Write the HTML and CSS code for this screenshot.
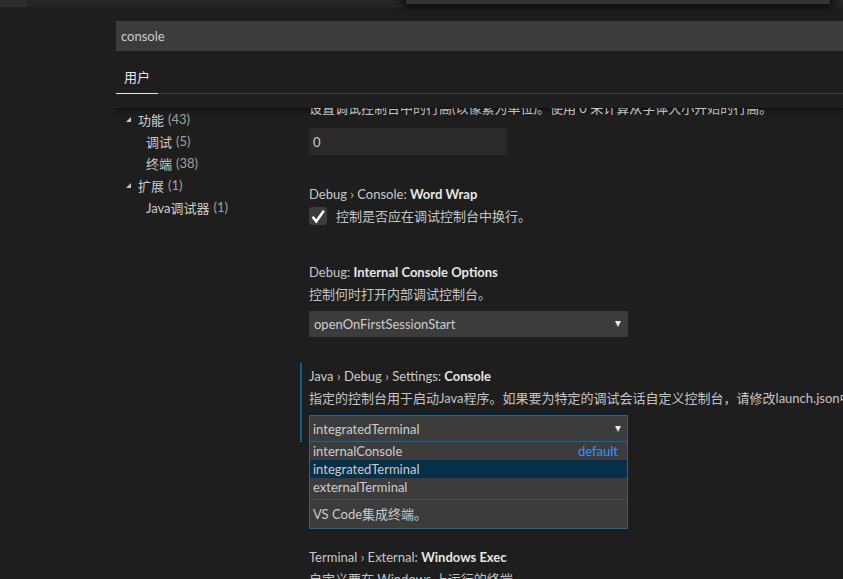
FILE: index.html
```html
<!DOCTYPE html>
<html lang="zh-CN">
<head>
<meta charset="utf-8">
<title>Settings</title>
<link rel="stylesheet" href="styles.css">
</head>
<body>
<div class="titlebar"><div class="titlebar-left"></div></div>
<div class="quickpick"></div>
<div class="editor">
  <div class="search"><span class="search-text">console</span></div>
  <div class="tabs"><div class="tab active">用户</div></div>
  <div class="body">
    <nav class="toc">
      <div class="toc-row lvl0"><span class="twistie"></span><span class="toc-label">功能</span><span class="count">(43)</span></div>
      <div class="toc-row lvl1"><span class="toc-label">调试</span><span class="count">(5)</span></div>
      <div class="toc-row lvl1"><span class="toc-label">终端</span><span class="count">(38)</span></div>
      <div class="toc-row lvl0"><span class="twistie"></span><span class="toc-label">扩展</span><span class="count">(1)</span></div>
      <div class="toc-row lvl1"><span class="toc-label">Java调试器</span><span class="count">(1)</span></div>
    </nav>
    <div class="settings">
      <div class="settings-inner">
        <div class="setting">
          <div class="setting-body">
            <div class="desc first">设置调试控制台中的行高(以像素为单位)。使用 0 来计算从字体大小开始的行高。</div>
            <div class="textinput first-input">0</div>
          </div>
        </div>

        <div class="setting">
          <div class="setting-body">
            <div class="title">Debug <span class="sep">›</span> Console: <b>Word Wrap</b></div>
            <div class="check-row">
              <span class="checkbox"><svg width="18" height="18" viewBox="0 0 18 18"><path d="M2.6 10.4 L4.6 8.9 L7.1 12.3 L13.9 3.1 L15.8 4.6 L7.3 16.4 Z" fill="#ffffff"/></svg></span>
              <span class="check-label">控制是否应在调试控制台中换行。</span>
            </div>
          </div>
        </div>

        <div class="setting">
          <div class="setting-body">
            <div class="title">Debug: <b>Internal Console Options</b></div>
            <div class="desc">控制何时打开内部调试控制台。</div>
            <div class="select"><span>openOnFirstSessionStart</span><span class="arrow"></span></div>
          </div>
        </div>

        <div class="setting focused">
          <div class="setting-body">
            <div class="title">Java <span class="sep">›</span> Debug <span class="sep">›</span> Settings: <b>Console</b></div>
            <div class="desc">指定的控制台用于启动Java程序。如果要为特定的调试会话自定义控制台，请修改launch.json中的“console”配置。</div>
            <div class="select open"><span>integratedTerminal</span><span class="arrow"></span></div>
          </div>
          <div class="dropdown">
            <div class="option"><span>internalConsole</span><span class="default">default</span></div>
            <div class="option selected"><span>integratedTerminal</span></div>
            <div class="option"><span>externalTerminal</span></div>
            <div class="details">VS Code集成终端。</div>
          </div>
        </div>

        <div class="setting">
          <div class="setting-body">
            <div class="title">Terminal <span class="sep">›</span> External: <b>Windows Exec</b></div>
            <div class="desc">自定义要在 Windows 上运行的终端。</div>
          </div>
        </div>
      </div>
    </div>
  </div>
</div>
</body>
</html>
```
FILE: styles.css
```css
html, body {
  margin: 0;
  height: 100%;
  background: #1e1e1e;
  overflow: hidden;
}
body {
  position: relative;
  font-family: Lato, "Noto Sans CJK SC", sans-serif;
  font-size: 13px;
  color: #cccccc;
}
.titlebar {
  height: 7px;
  background: #252526;
  display: flex;
}
.titlebar-left {
  width: 27px;
  background: #2c2c2c;
}
.quickpick {
  position: absolute;
  left: 406px;
  top: -10px;
  width: 424px;
  height: 14px;
  background: #333333;
  box-shadow: 0 0 8px 2px #000;
}
.editor {
  padding-left: 116px;
}
.search {
  margin-top: 14px;
  height: 30px;
  background: #3c3c3c;
  padding-left: 5px;
  display: flex;
  align-items: center;
  color: #cccccc;
}
.tabs {
  height: 42px;
  border-bottom: 1px solid #3c3c3c;
  display: flex;
}
.tab {
  width: 42px;
  box-sizing: border-box;
  padding: 9px 0 0 8px;
  display: flex;
  align-items: center;
  color: #e7e7e7;
  border-bottom: 1px solid #e7e7e7;
  margin-bottom: -1px;
}
.body {
  margin-top: 14px;
  height: 471px;
  display: flex;
  overflow: hidden;
  box-shadow: inset 0 6px 6px -6px #000;
}
.toc {
  width: 184px;
  flex: none;
}
.toc-row {
  height: 22px;
  display: flex;
  align-items: center;
  white-space: nowrap;
}
.lvl0 { padding-left: 10px; }
.lvl1 { padding-left: 30px; }
.twistie {
  width: 0;
  height: 0;
  border-style: solid;
  border-width: 0 0 5px 5px;
  border-color: transparent transparent #c5c5c5 transparent;
  margin: 1px 7px 0 0;
}
.count {
  color: #a0a0a0;
  margin-left: 4px;
}
.settings {
  flex: 1;
  min-width: 0;
  overflow: hidden;
}
.settings-inner {
  margin-top: -10px;
}
.setting {
  margin-bottom: 29px;
}
.setting.focused {
  margin-top: -3px;
  margin-bottom: 18px;
}
.setting-body {
  border-left: 2px solid transparent;
  padding-left: 7px;
}
.focused .setting-body {
  border-left-color: #0e5f8e;
  padding-top: 3px;
}
.title {
  line-height: 20px;
  white-space: nowrap;
  color: #c8c8c8;
}
.title b {
  font-weight: 700;
  color: #e7e7e7;
}
.sep {
  color: #bbbbbb;
}
.desc {
  line-height: 20px;
  margin-top: 2px;
  white-space: nowrap;
  color: #c4c4c4;
}
.desc.first {
  margin-top: 0;
}
.textinput {
  margin-top: 7px;
  width: 198px;
  height: 27px;
  box-sizing: border-box;
  background: #2a2a2a;
  padding-left: 4px;
  display: flex;
  align-items: center;
}
.textinput.first-input {
  margin-top: 10px;
}
.check-row {
  padding-top: 2px;
  padding-bottom: 8px;
  display: flex;
  align-items: center;
}
.checkbox {
  width: 18px;
  height: 18px;
  background: #3c3c3c;
  border-radius: 3px;
  display: block;
}
.checkbox svg {
  display: block;
}
.check-label {
  margin-left: 9px;
  color: #c4c4c4;
}
.select {
  margin-top: 7px;
  width: 319px;
  height: 26px;
  box-sizing: border-box;
  background: #3c3c3c;
  padding: 0 6px 0 4px;
  display: flex;
  align-items: center;
  justify-content: space-between;
  color: #cccccc;
  border: 1px solid #3c3c3c;
}
.select.open {
  height: 27px;
  padding-left: 3px;
  border-color: #0f6ca6;
}
.arrow {
  width: 0;
  height: 0;
  border-style: solid;
  border-width: 6px 3px 0 3px;
  border-color: #e8e8e8 transparent transparent transparent;
}
.dropdown {
  margin-left: 9px;
  width: 319px;
  box-sizing: border-box;
  background: #3c3c3c;
  border: 1px solid #0f6ca6;
  border-top: none;
}
.option {
  height: 18px;
  line-height: 18px;
  padding: 0 9px 0 3px;
  display: flex;
  justify-content: space-between;
  color: #cccccc;
}
.option.selected {
  background: #062f4a;
}
.default {
  color: #3794ff;
}
.details {
  margin-top: 3px;
  border-top: 1px solid #4a4a4a;
  padding: 5px 3px;
  line-height: 18px;
  color: #cccccc;
}
```
